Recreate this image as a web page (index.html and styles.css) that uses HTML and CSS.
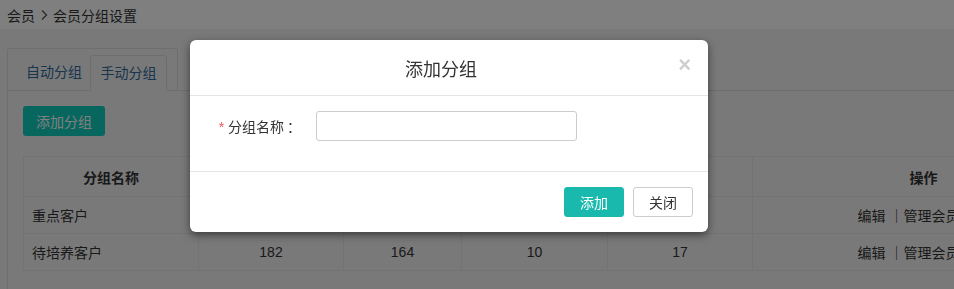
FILE: index.html
```html
<!DOCTYPE html>
<html lang="zh-CN">
<head>
    <meta charset="UTF-8">
    <meta name="viewport" content="width=device-width, initial-scale=1.0">
    <title>会员分组设置</title>
    <link rel="stylesheet" href="styles.css">
</head>
<body>
    <div class="breadcrumb">
        <span>会员</span>
        <svg class="sep" width="8" height="12" viewBox="0 0 8 12"><path d="M2 1.5 L6.5 6 L2 10.5" fill="none" stroke="#555" stroke-width="1.3"/></svg>
        <span>会员分组设置</span>
    </div>

    <div class="main">
        <div class="tab-nav">
            <div class="tab">自动分组</div>
            <div class="tab active">手动分组</div>
        </div>

        <div class="tab-panel">
            <button class="btn-add">添加分组</button>

            <table class="group-table">
                <thead>
                    <tr>
                        <th class="col-name">分组名称</th>
                        <th class="col-num">会员数量</th>
                        <th class="col-num2">本月新增</th>
                        <th class="col-num3">本月消费</th>
                        <th class="col-num4">本月流失</th>
                        <th class="col-ops">操作</th>
                    </tr>
                </thead>
                <tbody>
                    <tr>
                        <td class="name">重点客户</td>
                        <td>96</td>
                        <td>85</td>
                        <td>6</td>
                        <td>5</td>
                        <td class="ops">编辑 ｜管理会员 ｜删除</td>
                    </tr>
                    <tr>
                        <td class="name">待培养客户</td>
                        <td>182</td>
                        <td>164</td>
                        <td>10</td>
                        <td>17</td>
                        <td class="ops">编辑 ｜管理会员 ｜删除</td>
                    </tr>
                </tbody>
            </table>
        </div>
    </div>

    <div class="overlay"></div>

    <div class="modal">
        <div class="modal-header">
            <span class="modal-title">添加分组</span>
            <span class="modal-close">&times;</span>
        </div>
        <div class="modal-body">
            <label class="form-label"><span class="required">*</span> 分组名称<span class="colon">：</span></label>
            <input class="form-input" type="text">
        </div>
        <div class="modal-footer">
            <button class="btn btn-primary">添加</button>
            <button class="btn btn-default">关闭</button>
        </div>
    </div>
</body>
</html>
```

FILE: styles.css
```css
body {
    margin: 0;
    font-family: "Liberation Sans", "Noto Sans CJK SC", sans-serif;
    font-size: 14px;
    color: #333;
    background: #f3f3f4;
    overflow: hidden;
}

.breadcrumb {
    height: 29px;
    display: flex;
    align-items: center;
    gap: 5px;
    padding-left: 7px;
    background: #fff;
}

.main {
    padding: 19px 0 0 7px;
    width: 1110px;
}

.tab-nav {
    display: flex;
    align-items: flex-end;
    width: 169px;
    height: 41px;
    border: 1px solid #ddd;
    border-bottom: none;
    border-radius: 3px 3px 0 0;
}

.tab {
    color: #2f6a9a;
    padding: 0 8px 0 18px;
    height: 35px;
    line-height: 34px;
    box-sizing: border-box;
}

.tab.active {
    width: 77px;
    padding: 0;
    text-align: center;
    border: 1px solid #ddd;
    border-bottom: 1px solid #f3f3f4;
    border-radius: 3px 3px 0 0;
    height: 36px;
    margin-bottom: -1px;
    background: #f3f3f4;
}

.tab-panel {
    border-top: 1px solid #ddd;
    border-left: 1px solid #ddd;
    padding: 15px 0 30px 15px;
}

.btn-add {
    display: block;
    width: 82px;
    height: 30px;
    border: none;
    border-radius: 3px;
    background: #0ecdbd;
    color: #fff;
    font-family: inherit;
    font-size: 14px;
    padding: 0;
}

.group-table {
    margin-top: 20px;
    border-collapse: collapse;
    table-layout: fixed;
    width: 1071px;
}

.group-table th,
.group-table td {
    box-sizing: border-box;
    border: 1px solid #e7e7e7;
    text-align: center;
    padding: 0 8px;
    white-space: nowrap;
}

.group-table th {
    height: 40px;
    font-weight: bold;
}

.group-table td {
    height: 37px;
}

.group-table td.name {
    text-align: left;
}

.group-table td.ops {
    padding-left: 24px;
}

.col-name { width: 175px; }
.col-num { width: 145px; }
.col-num2 { width: 118px; }
.col-num3 { width: 146px; }
.col-num4 { width: 145px; }
.col-ops { width: 342px; }

.overlay {
    position: fixed;
    top: 0;
    left: 0;
    right: 0;
    bottom: 0;
    background: rgba(0, 0, 0, 0.5);
}

.modal {
    position: absolute;
    left: 190px;
    top: 40px;
    width: 518px;
    background: #fff;
    border-radius: 6px;
    box-shadow: 0 3px 9px rgba(0, 0, 0, 0.5);
}

.modal-header {
    height: 55px;
    border-bottom: 1px solid #e5e5e5;
    display: flex;
    align-items: center;
    justify-content: center;
    padding-right: 16px;
    position: relative;
}

.modal-title {
    font-size: 18px;
    color: #333;
}

.modal-close {
    position: absolute;
    right: 17px;
    top: 12px;
    font-size: 22px;
    font-weight: bold;
    color: #cfcfcf;
}

.modal-body {
    display: flex;
    align-items: center;
    padding: 15px 0 30px 20px;
}

.form-label {
    width: 88px;
    text-align: right;
    margin-right: 18px;
}

.colon {
    margin-left: 3px;
    margin-right: -3px;
}

.required {
    color: #ed5565;
}

.form-input {
    width: 261px;
    height: 30px;
    box-sizing: border-box;
    border: 1px solid #ccc;
    border-radius: 3px;
}

.modal-footer {
    border-top: 1px solid #e5e5e5;
    display: flex;
    justify-content: flex-end;
    gap: 9px;
    padding: 15px 15px 15px 0;
}

.btn {
    width: 60px;
    height: 30px;
    border-radius: 3px;
    font-family: inherit;
    font-size: 14px;
    padding: 0;
}

.btn-primary {
    background: #19b9ae;
    border: 1px solid #19b9ae;
    color: #fff;
}

.btn-default {
    background: #fff;
    border: 1px solid #ccc;
    color: #333;
}
```
